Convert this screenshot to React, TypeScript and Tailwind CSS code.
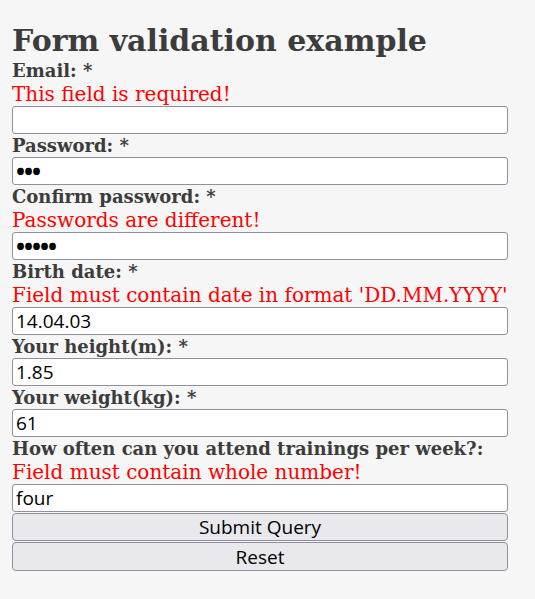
import React from "react";

const serif = { fontFamily: '"DejaVu Serif", serif' };

function Label({ children }: { children: React.ReactNode }) {
  return (
    <div className="h-[23px] leading-[23px] text-[18px] font-bold text-[#3c3c3c] whitespace-nowrap" style={serif}>
      {children}
    </div>
  );
}

function Err({ children }: { children: React.ReactNode }) {
  return (
    <div className="h-[24px] leading-[24px] text-[20px] text-[#ff0000] whitespace-nowrap" style={serif}>
      {children}
    </div>
  );
}

function Field({ value, dots = false }: { value: string; dots?: boolean }) {
  return (
    <input
      type="text"
      readOnly
      defaultValue={value}
      className={
        "block w-full h-[28px] border border-[#8f8f9d] rounded-[3px] bg-white px-[3px] text-black outline-none font-['Open_Sans',sans-serif] " +
        (dots ? "text-[24px] font-bold tracking-[-1px]" : "text-[19px]")
      }
    />
  );
}

function Btn({ children, tall = false }: { children: React.ReactNode; tall?: boolean }) {
  return (
    <button
      className={
        "block w-full border border-[#8f8f9d] rounded-[4px] bg-[#e9e9ed] text-[19px] text-black leading-[26px] font-['Open_Sans',sans-serif] " +
        (tall ? "h-[29px]" : "h-[28px]")
      }
    >
      {children}
    </button>
  );
}

export default function App() {
  return (
    <div className="min-h-[599px] w-[535px] bg-[#f6f6f6] pl-[12px] pt-[22px]">
      <div className="w-[496px] flex flex-col">
        <h1 className="h-[37px] leading-[37px] text-[30px] font-bold text-[#3c3c3c] whitespace-nowrap" style={serif}>
          Form validation example
        </h1>
        <Label>Email: *</Label>
        <Err>This field is required!</Err>
        <Field value="" />
        <Label>Password: *</Label>
        <Field value="•••" dots />
        <Label>Confirm password: *</Label>
        <Err>Passwords are different!</Err>
        <Field value="•••••" dots />
        <Label>Birth date: *</Label>
        <Err>Field must contain date in format 'DD.MM.YYYY'</Err>
        <Field value="14.04.03" />
        <Label>Your height(m): *</Label>
        <Field value="1.85" />
        <Label>Your weight(kg): *</Label>
        <Field value="61" />
        <Label>How often can you attend trainings per week?:</Label>
        <Err>Field must contain whole number!</Err>
        <Field value="four" />
        <div className="h-[1px]" />
        <Btn>Submit Query</Btn>
        <div className="h-[1px]" />
        <Btn tall>Reset</Btn>
      </div>
    </div>
  );
}
